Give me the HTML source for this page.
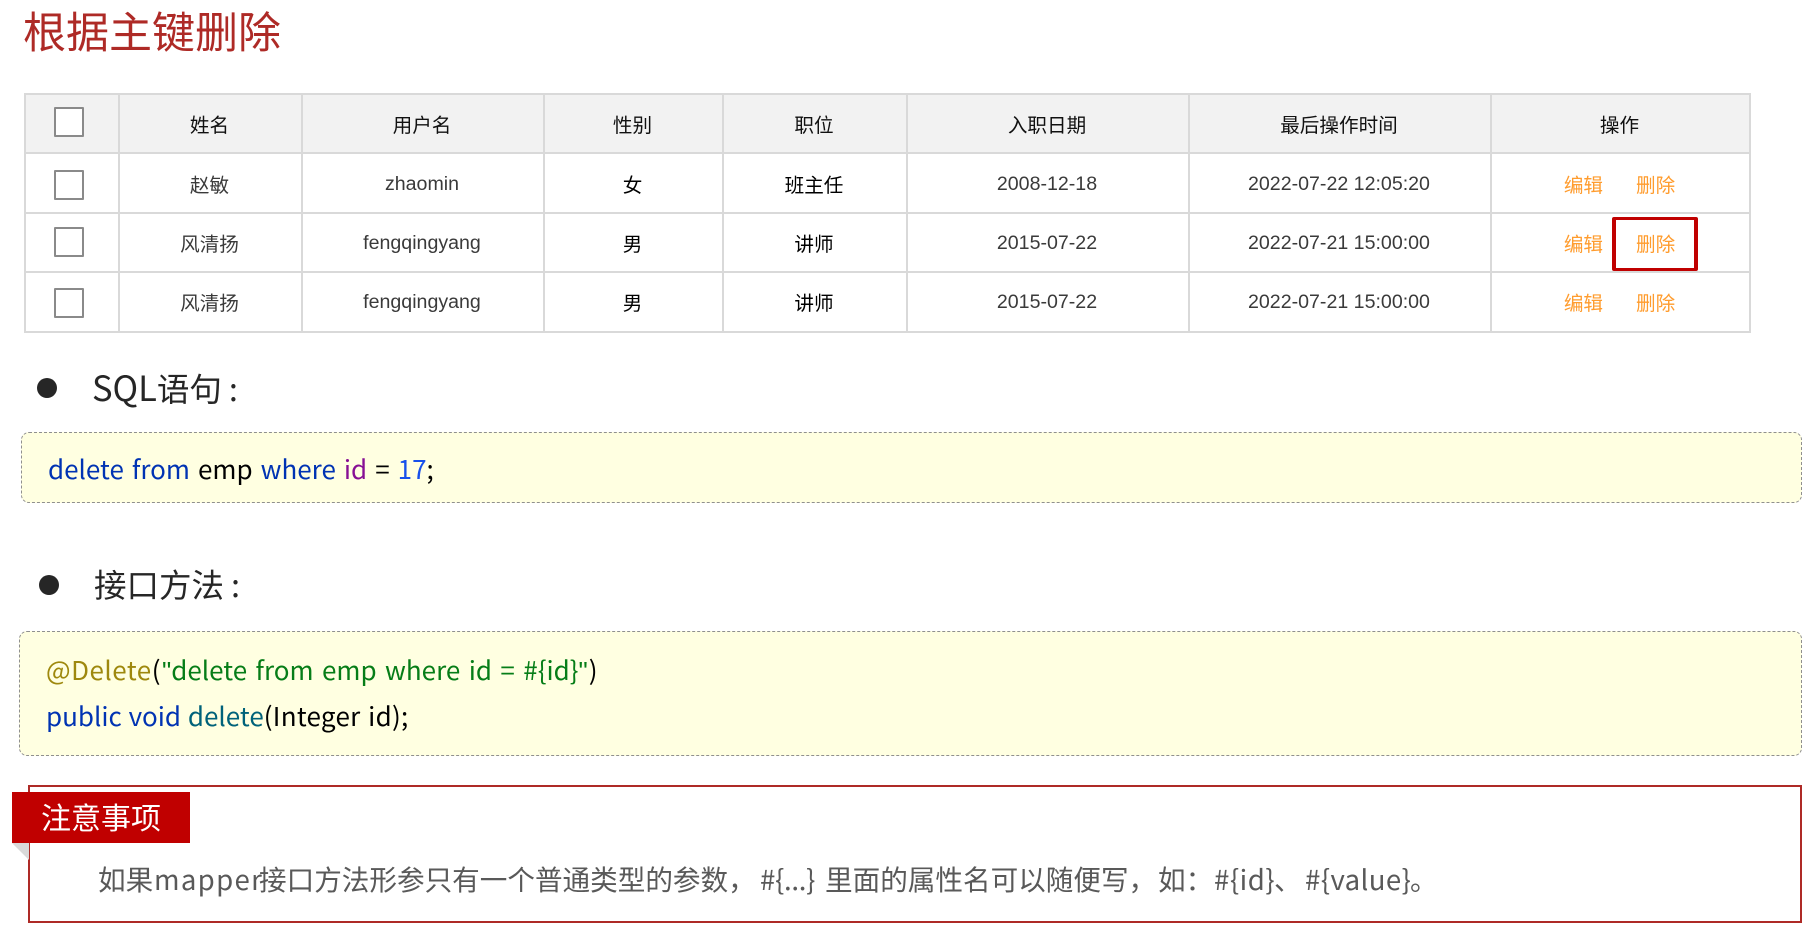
<!DOCTYPE html>
<html lang="zh-CN">
<head>
<meta charset="utf-8">
<title>根据主键删除</title>
<style>
html,body{margin:0;padding:0;width:1805px;height:925px;overflow:hidden;background:#fff}
body{position:relative;font-family:"Liberation Sans","Noto Sans CJK SC",sans-serif}
.a{position:absolute;white-space:nowrap}
.y{font-family:"Noto Sans CJK SC","Liberation Sans",sans-serif}
.l{font-family:"Liberation Sans",sans-serif}
h1{margin:0;left:23px;top:-1px;font-size:43px;line-height:62px;font-weight:400;color:#ae2a26}
table{position:absolute;left:24px;top:93px;width:1725px;border-collapse:collapse;table-layout:fixed}
td,th{border:2px solid #d9d9d9;padding:0 2px 0 0;height:57.4px;text-align:center;font-size:19.6px;font-weight:400;color:#3a3a3a}
th{background:#f2f2f2;color:#111}
.b{color:#000}
.e{color:#ff9c2e}
.e+.e{margin-left:33px}
.c{display:block;position:relative;width:26px;height:26px;margin:0 auto 0 28px;border:2px solid #8a8a8a;border-radius:1px;background:#fff}
.t{position:relative;top:1px}
.bl{width:20px;height:20px;border-radius:50%;background:#262626}
.h{font-size:32.5px;line-height:44px;color:#262626}
.h b{font-weight:400;font-size:34.5px}
.box{box-sizing:border-box;background:#ffffe1;border:1px dashed #8f8f8f;border-radius:8px}
.code{font-size:26px;line-height:40px;color:#000;word-spacing:2.2px}
.k{color:#0033b3}.p{color:#871094}.n{color:#1750eb}.s{color:#067d17}.an{color:#9e880d}.m{color:#00627a}
.note{left:28px;top:785px;width:1774px;height:138px;box-sizing:border-box;border:2px solid #ae2a26}
.tag{left:12px;top:792px;width:178px;height:51px;background:#c00000;color:#fff;font-size:30px;line-height:49px;text-indent:29px}
.txt{top:858px;font-size:27.6px;line-height:40px;color:#595959}
</style>
</head>
<body>
<h1 class="a y">根据主键删除</h1>

<table>
<colgroup><col style="width:94px"><col style="width:183px"><col style="width:242px"><col style="width:179px"><col style="width:184px"><col style="width:282px"><col style="width:302px"><col style="width:259px"></colgroup>
<tr><th><span class="c" style="top:-2px"></span></th><th class="y">姓名</th><th class="y">用户名</th><th class="y">性别</th><th class="y">职位</th><th class="y">入职日期</th><th class="y">最后操作时间</th><th class="y">操作</th></tr>
<tr><td><span class="c" style="top:2px"></span></td><td class="y">赵敏</td><td><span class="t">zhaomin</span></td><td class="y b">女</td><td class="y b">班主任</td><td><span class="t">2008-12-18</span></td><td><span class="t">2022-07-22 12:05:20</span></td><td class="y"><span class="e">编辑</span><span class="e">删除</span></td></tr>
<tr><td><span class="c"></span></td><td class="y">风清扬</td><td><span class="t">fengqingyang</span></td><td class="y b">男</td><td class="y b">讲师</td><td><span class="t">2015-07-22</span></td><td><span class="t">2022-07-21 15:00:00</span></td><td class="y"><span class="e">编辑</span><span class="e">删除</span></td></tr>
<tr><td><span class="c" style="top:1px"></span></td><td class="y">风清扬</td><td><span class="t">fengqingyang</span></td><td class="y b">男</td><td class="y b">讲师</td><td><span class="t">2015-07-22</span></td><td><span class="t">2022-07-21 15:00:00</span></td><td class="y"><span class="e">编辑</span><span class="e">删除</span></td></tr>
</table>

<div class="a" style="left:1612px;top:217px;width:86px;height:54px;box-sizing:border-box;border-style:solid;border-color:#c00000;border-width:3px 4px;border-radius:2px"></div>

<div class="a bl" style="left:37px;top:378px"></div>
<div class="a h y" style="left:92px;top:364px"><b>SQL</b>语句<span style="margin-left:7px">:</span></div>
<div class="a box" style="left:21px;top:432px;width:1781px;height:71px"></div>
<div class="a code y" style="left:48px;top:449px"><span class="k">delete from</span> emp <span class="k">where</span> <span class="p">id</span> = <span class="n">17</span>;</div>

<div class="a bl" style="left:39px;top:575px"></div>
<div class="a h y" style="left:94px;top:562px">接口方法<span style="margin-left:7px">:</span></div>
<div class="a box" style="left:19px;top:631px;width:1783px;height:125px"></div>
<div class="a code y" style="left:46px;top:650px;word-spacing:2.6px"><span class="an" style="letter-spacing:.5px">@Delete</span>(<span class="s"><span class="l" style="margin-left:1.5px">"</span>delete from emp where id = #{id}<span class="l">"</span></span><span style="margin-left:1px">)</span></div>
<div class="a code y" style="left:46px;top:696px;word-spacing:1px"><span class="k">public void</span> <span class="m">delete</span><span style="letter-spacing:.28px;word-spacing:1.5px">(Integer id);</span></div>

<div class="a note"></div>
<svg class="a" style="left:12px;top:843px" width="17" height="17" viewBox="0 0 17 17"><polygon points="0,0 17,0 17,17" fill="#d9d9d9"/></svg>
<div class="a tag y">注意事项</div>
<span class="a txt y" style="left:98px">如果</span>
<span class="a txt y" style="left:154px;letter-spacing:1.3px">mapper</span>
<span class="a txt y" style="left:259px">接口方法形参只有一个普通类型的参数，</span>
<span class="a txt y" style="left:760px;letter-spacing:-.3px">#{...}</span>
<span class="a txt y" style="left:825px">里面的属性名可以随便写，</span>
<span class="a txt y" style="left:1158px">如：</span>
<span class="a txt y" style="left:1214px;letter-spacing:.5px">#{id}</span>
<span class="a txt y" style="left:1274px">、</span>
<span class="a txt y" style="left:1305px;letter-spacing:.4px">#{value}</span>
<span class="a txt y" style="left:1410px">。</span>
</body>
</html>
